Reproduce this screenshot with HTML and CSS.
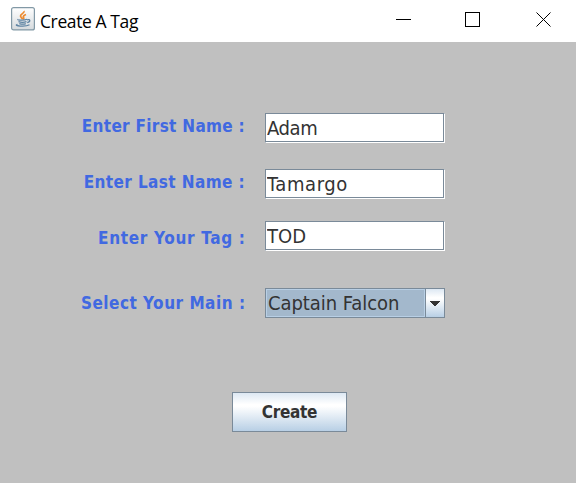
FILE: index.html
```html
<!DOCTYPE html>
<html lang="en">
<head>
<meta charset="utf-8">
<title>Create A Tag</title>
<link rel="stylesheet" href="styles.css">
</head>
<body>
<header class="titlebar">
  <svg class="app-icon" width="24" height="24" viewBox="0 0 24 24">
    <defs><linearGradient id="g" x1="0" y1="0" x2="0" y2="1"><stop offset="0" stop-color="#fff"/><stop offset="1" stop-color="#d5dadd"/></linearGradient></defs>
    <rect x=".6" y=".6" width="22.8" height="22.3" rx="2" fill="url(#g)" stroke="#8299a6" stroke-width="1.2"/>
    <path d="M13 4c1 2-3.500 3-3.500 5 0 1.300 1.500 1.800 2 3.200M15 7.500c-2 .8-3.300 1.800-2.400 3 .5.700.3 1.200-.4 1.900" fill="none" stroke="#ee8a2d" stroke-width="1.700"/>
    <path d="M7 12.300c-1 1 7 1.100 9 0M7.500 14.600c2 .7 6 .7 8 0M8.300 16.600c2 .6 5 .6 6.500 0M16 12.800c3.500-1 3.800 1.900.2 2.900M6.500 17.300c-5 1.700 8 2.900 12 .5" fill="none" stroke="#5d83a2" stroke-width="1.300"/>
  </svg>
  <span class="title">Create A Tag</span>
  <svg class="controls" width="156" height="16" viewBox="0 0 156 16" fill="none" stroke="#000">
    <path d="M0 7.500h15M69.500.500h14v14h-14z" shape-rendering="crispEdges"/>
    <path d="M140.500.500l14 14M154.500.500l-14 14"/>
  </svg>
</header>
<main class="panel">
  <form class="form">
    <div class="row"><label class="label first" for="first">Enter First Name :</label><input class="field adam" id="first" value="Adam"></div>
    <div class="row"><label class="label last" for="last">Enter Last Name :</label><input class="field tamargo" id="last" value="Tamargo"></div>
    <div class="row row-tag"><label class="label tag" for="tag">Enter Your Tag :</label><input class="field" id="tag" value="TOD"></div>
    <div class="row row-main"><span class="label main">Select Your Main :</span>
      <div class="combo"><span class="value">Captain Falcon</span><span class="arrow"><svg width="10" height="5" viewBox="0 0 10 5" shape-rendering="crispEdges"><path d="M0 0h10v1H9v1H8v1H7v1H6v1H4V4H3V3H2V2H1V1H0z" fill="#333"/></svg></span></div>
    </div>
    <button class="create" type="button">Create</button>
  </form>
</main>
</body>
</html>
```
FILE: styles.css
```css
* { box-sizing: border-box; }
body {
  margin: 0;
  height: 483px;
  background: #c0c0c0;
  font-family: "DejaVu Sans Condensed", "DejaVu Sans", sans-serif;
  font-stretch: condensed;
  color: #333;
}
.titlebar {
  height: 42px;
  display: flex;
  align-items: flex-start;
  background: #fff;
  padding: 7px 24px 0 11px;
}
.app-icon { flex: none; }
.title {
  margin: 1px auto 0 5px;
  font: 17.5px/26px "Open Sans", sans-serif;
  letter-spacing: -0.4px;
  color: #000;
  white-space: nowrap;
}
.controls { flex: none; margin-top: 5px; }
.panel { padding-top: 71px; }
.form { display: flex; flex-direction: column; }
.row {
  display: grid;
  grid-template-columns: 245px 180px;
  column-gap: 20px;
  height: 30px;
  margin-bottom: 26px;
}
.row-tag { margin-top: -4px; margin-bottom: 37px; }
.row-main { margin-bottom: 74px; }
.label {
  justify-self: end;
  font-size: 17px;
  font-weight: bold;
  line-height: 26px;
  white-space: nowrap;
  color: #4169e1;
}
.first { letter-spacing: 0.3px; }
.last { letter-spacing: 0.4px; }
.tag { letter-spacing: 0.68px; margin-right: -0.6px; }
.main { letter-spacing: 0.5px; margin-right: -0.5px; }
.row-tag .label { line-height: 34px; }
.row-main .label { line-height: 30px; }
.field {
  width: 180px;
  height: 30px;
  margin: 0;
  padding: 0 1px;
  border: 1px solid #7a8a99;
  border-right-color: #fff;
  border-bottom-color: #fff;
  border-radius: 0;
  outline: none;
  background: #fff;
  box-shadow: inset -1px -1px #7a8a99;
  font: inherit;
  font-size: 20px;
  color: #333;
}
.adam { letter-spacing: -0.4px; }
.tamargo { letter-spacing: 0.6px; }
.combo {
  display: flex;
  height: 30px;
  border: 1px solid #7a8a99;
  background: #a3b8cc;
}
.value {
  width: 159px;
  padding-left: 1px;
  border: 1px solid #b8cfe5;
  font-size: 20px;
  line-height: 27px;
  letter-spacing: -0.05px;
  white-space: nowrap;
}
.arrow {
  flex: 1;
  display: flex;
  align-items: center;
  justify-content: center;
  border-left: 1px solid #7a8a99;
  background: linear-gradient(#dde8f3, #fff 30%, #fff 35%, #b8cfe5);
}
.create {
  align-self: flex-start;
  width: 115px;
  height: 40px;
  margin-left: 232px;
  padding: 0;
  border: 1px solid #7a8a99;
  border-radius: 0;
  background: linear-gradient(#dde8f3, #fff 30%, #fff 35%, #b8cfe5);
  font: inherit;
  font-size: 17px;
  font-weight: bold;
  letter-spacing: -0.3px;
  color: #333;
}
```
